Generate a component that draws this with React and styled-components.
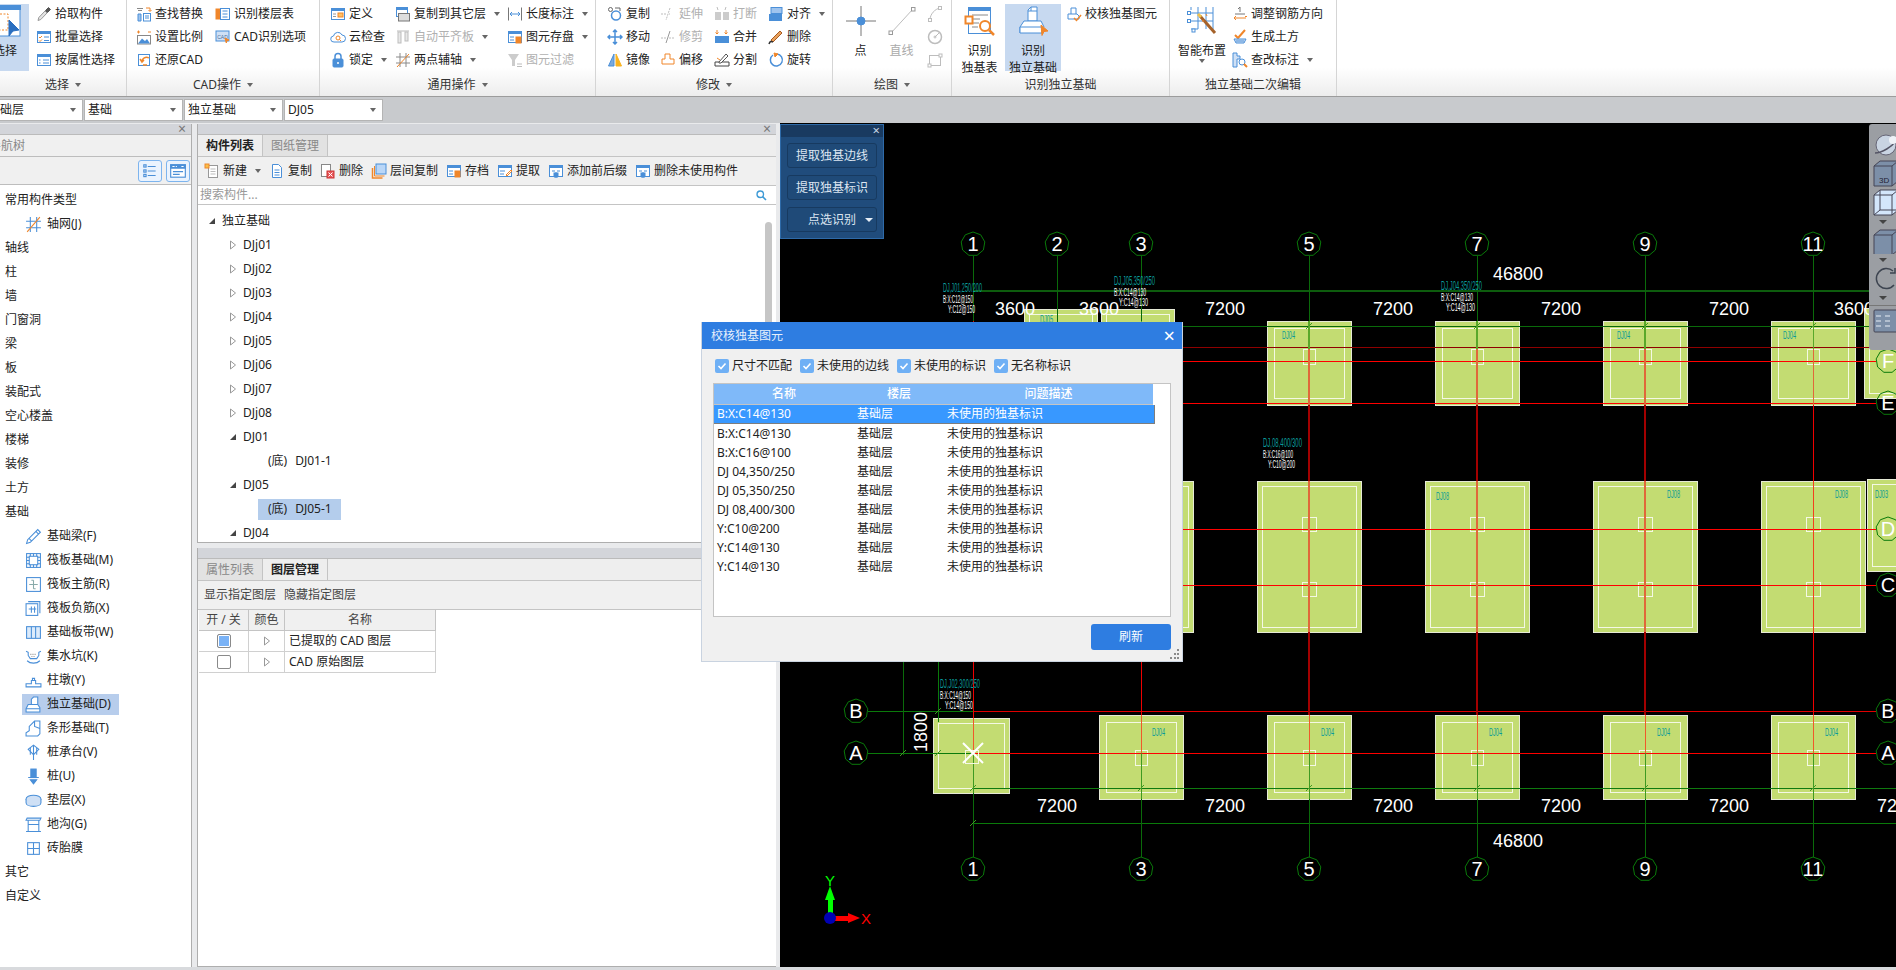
import React from 'react';
import styled, { createGlobalStyle } from 'styled-components';

const BL = '#4a8fd8';
const OR = '#f0862a';
const GY = '#bdbdbd';

const head = <rect x="1" y="2" width="14" height="3" fill={BL} stroke="none" />;
const win = <rect x="1.5" y="2.5" width="13" height="11" fill="#fff" />;

const icons = {
  pick: <><path d="M2 14.5l.8-3L9 5l2 2-6.2 6.5z" fill="#e4e4e4" stroke="#999" /><path d="M9.5 4.5l3-3 2 2-3 3z" fill="#555" stroke="#555" /></>,
  batch: <>{win}{head}<path d="M3 8l1 1 2-2M3 11.5l1 1 2-2" stroke={OR} /><path d="M8 8h5M8 11.5h5" /></>,
  attr: <>{win}{head}<path d="M3 8h1.5M3 11h1.5M7 8h6M7 11h6" /></>,
  findrep: <><path d="M1 2.5h6M2 4.500h4" stroke="#888" /><path d="M10 2h4v3M12.500 4l1.500 1.500L15.500 4" stroke={OR} /><rect x="7.500" y="7.500" width="7" height="7.500" fill="#fff" /><path d="M9 10h4M9 12h4" /><path d="M2 8v7h3V8z" fill="#9fc4ee" /></>,
  scale: <><path d="M1 3h3M2.500 1.500v3M12 3h3" stroke={OR} /><rect x="1.500" y="6.500" width="13" height="8.500" fill="#fff" stroke="#888" /><path d="M2 14.500l4-5 3 2.500 2-2 3 4.500z" fill={BL} stroke="none" /></>,
  restore: <><rect x="2.500" y="2.500" width="11" height="11" /><path d="M13 6a4.500 4.500 0 0 0-7 4M4 7l2 3 2-2M11 13H7" stroke={OR} strokeWidth="1.500" /></>,
  floortable: <><rect x="1" y="3" width="5" height="10" fill={OR} stroke={OR} /><rect x="5.500" y="2.500" width="9" height="11" fill="#fff" /><path d="M7.500 5h5M7.500 8h5M7.500 11h5" /></>,
  cadopt: <><rect x="1" y="2" width="13" height="10" fill="#cfe0f5" /><text x="2.200" y="9.500" fontSize="5" fill="#4a6e9a" stroke="none" fontFamily="Liberation Sans">CAD</text><path d="M10 9l4 2-2 .7-.7 2.300z" fill={OR} stroke={OR} /></>,
  define: <>{win}{head}<rect x="8" y="7" width="5" height="4" fill="#ffc266" stroke={OR} /><path d="M3 8h3M3 10.500h3" stroke="#999" /></>,
  cloud: <><path d="M4 13a3 3 0 0 1-.5-6A4.500 4.500 0 0 1 12 6a3.500 3.500 0 0 1 0 7z" fill="#fff" /><circle cx="8" cy="9" r="2" stroke={OR} /><path d="M9.500 10.500l1.500 1.500" stroke={OR} /></>,
  lock: <><path d="M5 7V4.500a3 3 0 0 1 6 0V7" strokeWidth="1.500" /><rect x="3" y="7" width="10" height="8" rx="1" fill={BL} /><circle cx="8" cy="11" r="1" fill="#fff" stroke="none" /></>,
  copyfloor: <><rect x="1.500" y="1.500" width="11" height="9" fill="#fff" /><rect x="1" y="1" width="12" height="3" fill={BL} stroke="none" /><rect x="3.500" y="7.500" width="11" height="7.500" fill="#ddd" stroke="#777" /></>,
  autoalign: <><path d="M2 2h12" stroke={GY} /><rect x="3" y="3" width="3" height="11" fill="#e8e8e8" stroke={GY} /><rect x="10" y="3" width="3" height="9" fill="#e8e8e8" stroke={GY} /></>,
  twopoint: <><path d="M1 5h14M1 11h14M5 1v14M11 1v14" stroke="#8a8a8a" /><path d="M2 15L14 2" stroke={OR} /></>,
  dimension: <><path d="M1.500 1.500v13M14.500 1.500v13" stroke="#777" /><path d="M3 8h10M5 6L3 8l2 2M11 6l2 2-2 2" /></>,
  saveunit: <>{win}{head}<path d="M3 8h4M3 11h4" /><rect x="9" y="8" width="5" height="6" fill={OR} stroke={OR} /></>,
  filter: <><path d="M1 2h11L8 8v6H5V8z" fill="#ccc" stroke="none" /><path d="M10 12h5M10 14.500h5" stroke={GY} /></>,
  copy: <><circle cx="3.500" cy="3.500" r="2" stroke="#666" /><path d="M8 2h5v3" stroke="#666" /><circle cx="9" cy="9.500" r="4.500" strokeWidth="1.500" /></>,
  move: <path d="M8 1v14M1 8h14M6 3l2-2 2 2M6 13l2 2 2-2M3 6L1 8l2 2M13 6l2 2-2 2" strokeWidth="1.500" />,
  mirror: <><path d="M7 2L1.500 14H7z" fill="#7aa9dd" /><path d="M9 2l5.500 12H9z" fill="#f9b320" stroke="#f9b320" /></>,
  extend: <path d="M1 8h6M10 2l-4 12M9 8h1" stroke={GY} strokeDasharray="2 1" />,
  trim: <><path d="M1 9h5M9 9h6" stroke={GY} strokeDasharray="2 1" /><path d="M10 2L6 14" stroke="#999" /></>,
  breakit: <><path d="M3 1l1 3M12 1l-1 3" stroke={GY} /><rect x="1" y="6" width="6" height="8" fill="#ccc" stroke="none" /><rect x="9" y="6" width="6" height="8" fill="#ccc" stroke="none" /></>,
  merge: <><path d="M3 1v4M1.500 3.500L3 5l1.500-1.500M12 1v4M10.500 3.500L12 5l1.500-1.500" stroke={OR} /><rect x="1" y="7" width="14" height="7" fill={BL} stroke="none" /></>,
  align: <><rect x="3" y="1.500" width="11" height="6" fill="#9fc4ee" /><rect x="1" y="8" width="13" height="7" fill={BL} stroke="none" /></>,
  erase: <><path d="M3 11L12 2l2 2-9 9z" fill="#e8a15c" stroke="#a85a20" /><path d="M1 15c1-3 2-3 4-2" stroke="#333" strokeWidth="1.500" /></>,
  offset: <path d="M5 2h5v5h4v5H2V7h3z" fill="#fff" stroke={OR} />,
  split: <><path d="M1 10h14v4H1z" fill="#fff" stroke="#444" /><path d="M5 10l7-8 2 2-7 7H5z" fill="#fff" stroke="#555" /><path d="M3 6l3 2" stroke={OR} /></>,
  rotate: <><path d="M5 3a6 6 0 1 0 4-1" strokeWidth="1.500" /><path d="M6 1l4 1-3 3z" fill={OR} stroke={OR} /></>,
  arc: <><path d="M3 14C3 8 8 3 13 2" stroke={GY} /><rect x="1.500" y="12.500" width="3" height="3" fill="#fff" stroke={GY} /><rect x="11.500" y="0.500" width="3" height="3" fill="#fff" stroke={GY} /></>,
  circ: <><circle cx="8" cy="8" r="6.500" stroke={GY} strokeWidth="1.500" /><path d="M8 8l4-4" stroke={GY} /><circle cx="8" cy="8" r="1" stroke={GY} /></>,
  rectd: <><rect x="2.500" y="3.500" width="11" height="10" stroke={GY} /><rect x="1" y="12" width="3" height="3" fill="#fff" stroke={GY} /><rect x="12" y="2" width="3" height="3" fill="#fff" stroke={GY} /></>,
  checkbase: <><path d="M5 8V2h5v6M2 8h9l2 2v3H2z" fill="#fff" /><path d="M8 12l2.500 2.500L15 9" stroke={OR} strokeWidth="1.500" /></>,
  rebar: <><path d="M8 1v5M6 3l2-2M3 8h10" stroke="#777" /><path d="M2 12h12M4 10l-2 2 2 2M13 10.500h2" stroke={OR} /></>,
  earth: <><path d="M3 6l3 3 7-8" stroke={OR} strokeWidth="2" /><path d="M2 10h12l-2 4H4z" fill="#cfe0f5" /><path d="M4 12h8" /></>,
  inspect: <><path d="M1 1h4v3h3v3H5v8H1z" fill="#cfe0f5" /><circle cx="10" cy="10" r="3" /><path d="M12 12l3 3" stroke={OR} strokeWidth="2" /></>,
  fresh: <><rect x="4.500" y="2.500" width="9" height="12" fill="#fff" stroke="#999" /><path d="M6.500 6h5M6.500 8.500h5M6.500 11h5" stroke="#bbb" /><rect x="1" y="1" width="4" height="4" fill="#f7c04a" stroke={OR} /></>,
  doc: <><path d="M3.500 1.500h6l3 3v10h-9z" fill="#fff" /><path d="M5.500 7h5M5.500 9.500h5M5.500 12h5" /></>,
  docdel: <><rect x="1.500" y="1.500" width="9" height="12" fill="#fff" stroke="#888" /><rect x="7" y="8" width="7" height="7" fill="#e8585a" stroke="#c33" /><path d="M8.500 9.500l4 4M12.500 9.500l-4 4" stroke="#fff" /></>,
  layercopy: <><path d="M1.500 5v10h10" stroke={OR} strokeWidth="1.500" /><path d="M3.500 3v10h10" stroke={OR} /><rect x="5" y="1" width="10" height="10" fill="#b9d6f7" /></>,
  extract: <>{win}{head}<path d="M3 8h5M3 11h4" /><path d="M9 12l5-5 1 1-5 5z" stroke={OR} /></>,
  prefix: <>{win}{head}<path d="M4 8h3M9 8h3M8 9v6M6 14h4" /><rect x="6" y="10" width="4" height="3" fill={BL} /></>,
  axisnet: <><path d="M1 5h14M1 11h14M5 1v14M11 1v14" /><path d="M2 15L14 1" stroke={OR} /></>,
  beam: <path d="M1.500 14.500l1-3.500L12 1.500l2.500 2.500L5 13.500zM4 10l2.500 2.500M10 3l3 3" />,
  raft: <><rect x="1.500" y="1.500" width="13" height="13" /><rect x="4" y="4" width="8" height="8" /><path d="M1.500 5h2.500M1.500 8h2.500M1.500 11h2.500M12 5h2.500M12 8h2.500M12 11h2.500M5 1.500V4M8 1.500V4M11 1.500V4M5 12v2.500M8 12v2.500M11 12v2.500" /></>,
  raftmain: <><rect x="1.500" y="1.500" width="13" height="13" /><path d="M8 4v8M4 8h8M6 4h2M8 12h2" stroke="#8aa" /></>,
  raftneg: <><rect x="1" y="3.500" width="11" height="11" fill="#fff" /><path d="M3 1.500h11v11" /><path d="M6 6v6M9 6v6M3.500 8.500h7" /></>,
  strip: <><rect x="1.500" y="2.500" width="13" height="11" fill="#dcebfb" /><path d="M6 2.500v11M10 2.500v11" /></>,
  sump: <><path d="M1 3l2 1v3l2 3h6l2-3V4l2-1" /><path d="M2 12c3 3 9 3 12 0" /><path d="M5 6h6M6 8h4" stroke="#999" strokeDasharray="1 1" /></>,
  pedestal: <><path d="M1 14h14v-3H10V8H6v3H1z" /><path d="M7 8V6h2v2" /></>,
  isofoot: <><path d="M6 8V3l2-2h4v7M1 15v-3l2-4h9l2 3v4z" fill="#fff" /><path d="M1 12h13" /></>,
  stripfoot: <><path d="M1 15v-3l3-2V6l5-5h5v12l-2 2z" fill="#fff" /><path d="M9 1v5l5 2" /></>,
  capv: <><path d="M8 1l5 4-5 5-5-5z" /><path d="M8 1v14M5 3.500V10M11 3.500V10" /></>,
  pile: <><rect x="5.500" y="1" width="5" height="8" fill={BL} /><path d="M3 9h10M5 11h6l-3 4z" fill={BL} /></>,
  cushion: <><ellipse cx="8" cy="6.500" rx="7" ry="3.500" fill="#cfe0f5" /><path d="M1 6.500V10c0 2 3 3.500 7 3.500s7-1.500 7-3.500V6.500" fill="#cfe0f5" /></>,
  trench: <><path d="M1 4l1-2h13l-1 2zM3 4v10M13 4v10M1 14.500h14M3 8h10" /></>,
  membrane: <><rect x="2.500" y="2.500" width="11" height="11" /><path d="M8 2.500v11M2.500 8h11M6 7h0M10 7h0" /></>,
  find: <><circle cx="6.500" cy="6.500" r="4" stroke="#3d9ad6" strokeWidth="1.700" /><path d="M9.500 9.500l4 4" stroke="#3d9ad6" strokeWidth="2" /></>,
  listview: <><path d="M6 4h7M6 8h7M6 12h7" /><rect x="2.500" y="2.500" width="2" height="2" /><rect x="2.500" y="7" width="2" height="2" /><rect x="2.500" y="11" width="2" height="2" /></>,
  panelview: <><rect x="1.500" y="2.500" width="13" height="11" fill="#fff" /><rect x="1" y="2" width="14" height="4" fill={BL} stroke="none" /><path d="M3 4h2M6 4h1M11 4h2" stroke="#fff" /><path d="M3.500 8.500h9M3.500 11h6" /></>
};

const bigIcons = {
  selectwin: <><rect x="1" y="1" width="30" height="30" fill="#fff" /><rect x="0" y="0" width="32" height="5" fill={BL} stroke="none" /><rect x="4" y="9" width="15" height="16" stroke={OR} strokeDasharray="2 1.500" /><path d="M20 15l10 10-6 1-4 5z" fill="#2a6fc0" stroke="#2a6fc0" /></>,
  point: <><path d="M16 1v12M16 19v12M1 16h12M19 16h12" stroke="#777" /><circle cx="16" cy="16" r="4" fill={BL} /></>,
  line: <><path d="M5 28L27 4" stroke={GY} /><rect x="3" y="26" width="3.500" height="3.500" fill="#fff" stroke="#999" /><rect x="25.500" y="2.500" width="3.500" height="3.500" fill="#fff" stroke="#999" /></>,
  readtable: <><rect x="4.500" y="3.500" width="22" height="25" fill="#fff" /><rect x="4" y="2" width="23" height="4" fill={BL} stroke="none" /><path d="M8 10h16M8 14h8M8 18h7M8 22h6" stroke="#888" /><rect x="1.500" y="11.500" width="7" height="7" fill="#fff" stroke={OR} strokeWidth="2" /><circle cx="21" cy="21" r="5" fill="#fff" stroke={OR} strokeWidth="2" /><path d="M25 25l5 5" stroke={OR} strokeWidth="2.500" /></>,
  readfoot: <><path d="M11 16V5l3-3h6v14z" fill="#fff" /><path d="M14 2v4h6M11 6h3" /><path d="M3 28v-6l4-6h17l3 6" fill="#fff" /><path d="M3 22h22v6H3z" fill="#fff" /><path d="M24 20l7 6-4 .5-2 4z" fill={OR} stroke={OR} /></>,
  wand: <><path d="M5 8h22M5 16h22M12 2v22M20 2v22M5 2v3M27 2v22M5 24h7" /><rect x="1.500" y="6.500" width="3" height="3" fill="#fff" /><rect x="1.500" y="14.500" width="3" height="3" fill="#fff" /><rect x="6" y="24" width="3" height="3" fill="#fff" /><path d="M14 11l15 17" stroke="#a5622a" strokeWidth="3" /><path d="M12 9l3 3" stroke="#f3c24a" strokeWidth="3" /><path d="M20 9l1 2M16 16l2 0" stroke={OR} /></>
};

const ribbonGroups = [
  {
    label: '选择', arrow: true, width: 127, pad: 0,
    cols: [
      { big: { icon: 'selectwin', lines: ['选择'], active: true, width: 48, shift: -19 } },
      { left: 7, items: [{ i: 'pick', t: '拾取构件' }, { i: 'batch', t: '批量选择' }, { i: 'attr', t: '按属性选择' }] }
    ]
  },
  {
    label: 'CAD操作', arrow: true, width: 193, pad: 9,
    cols: [
      { width: 79, items: [{ i: 'findrep', t: '查找替换' }, { i: 'scale', t: '设置比例' }, { i: 'restore', t: '还原CAD' }] },
      { items: [{ i: 'floortable', t: '识别楼层表' }, { i: 'cadopt', t: 'CAD识别选项' }] }
    ]
  },
  {
    label: '通用操作', arrow: true, width: 276, pad: 10,
    cols: [
      { width: 65, items: [{ i: 'define', t: '定义' }, { i: 'cloud', t: '云检查' }, { i: 'lock', t: '锁定', more: true }] },
      { width: 112, items: [{ i: 'copyfloor', t: '复制到其它层', more: true }, { i: 'autoalign', t: '自动平齐板', more: true, off: true }, { i: 'twopoint', t: '两点辅轴', more: true }] },
      { items: [{ i: 'dimension', t: '长度标注', more: true }, { i: 'saveunit', t: '图元存盘', more: true }, { i: 'filter', t: '图元过滤', off: true }] }
    ]
  },
  {
    label: '修改', arrow: true, width: 237, pad: 11,
    cols: [
      { width: 53, items: [{ i: 'copy', t: '复制' }, { i: 'move', t: '移动' }, { i: 'mirror', t: '镜像' }] },
      { width: 54, items: [{ i: 'extend', t: '延伸', off: true }, { i: 'trim', t: '修剪', off: true }, { i: 'offset', t: '偏移' }] },
      { width: 54, items: [{ i: 'breakit', t: '打断', off: true }, { i: 'merge', t: '合并' }, { i: 'split', t: '分割' }] },
      { items: [{ i: 'align', t: '对齐', more: true }, { i: 'erase', t: '删除' }, { i: 'rotate', t: '旋转' }] }
    ]
  },
  {
    label: '绘图', arrow: true, width: 119, pad: 7,
    cols: [
      { big: { icon: 'point', lines: ['点'], width: 41 } },
      { big: { icon: 'line', lines: ['直线'], width: 41, off: true } },
      { left: 5, items: [{ i: 'arc' }, { i: 'circ' }, { i: 'rectd' }] }
    ]
  },
  {
    label: '识别独立基础', width: 218, pad: 2,
    cols: [
      { big: { icon: 'readtable', lines: ['识别', '独基表'], width: 51 } },
      { big: { icon: 'readfoot', lines: ['识别', '独立基础'], active: true, width: 56 } },
      { left: 5, items: [{ i: 'checkbase', t: '校核独基图元' }] }
    ]
  },
  {
    label: '独立基础二次编辑', width: 167, pad: 4,
    cols: [
      { big: { icon: 'wand', lines: ['智能布置'], width: 56, more: true } },
      { left: 2, items: [{ i: 'rebar', t: '调整钢筋方向' }, { i: 'earth', t: '生成土方' }, { i: 'inspect', t: '查改标注', more: true }] }
    ]
  }
];

const selects = ['基础层', '基础', '独立基础', 'DJ05'];

const navRows = [
  { t: '常用构件类型' }, { t: '轴网(J)', i: 'axisnet' }, { t: '轴线' }, { t: '柱' }, { t: '墙' }, { t: '门窗洞' }, { t: '梁' },
  { t: '板' }, { t: '装配式' }, { t: '空心楼盖' }, { t: '楼梯' }, { t: '装修' }, { t: '土方' }, { t: '基础' },
  { t: '基础梁(F)', i: 'beam' }, { t: '筏板基础(M)', i: 'raft' }, { t: '筏板主筋(R)', i: 'raftmain' }, { t: '筏板负筋(X)', i: 'raftneg' },
  { t: '基础板带(W)', i: 'strip' }, { t: '集水坑(K)', i: 'sump' }, { t: '柱墩(Y)', i: 'pedestal' }, { t: '独立基础(D)', i: 'isofoot', on: true },
  { t: '条形基础(T)', i: 'stripfoot' }, { t: '桩承台(V)', i: 'capv' }, { t: '桩(U)', i: 'pile' }, { t: '垫层(X)', i: 'cushion' },
  { t: '地沟(G)', i: 'trench' }, { t: '砖胎膜', i: 'membrane' }, { t: '其它' }, { t: '自定义' }
];

const partTools = [
  { i: 'fresh', t: '新建', more: true }, { i: 'doc', t: '复制' }, { i: 'docdel', t: '删除' }, { i: 'layercopy', t: '层间复制' },
  { i: 'saveunit', t: '存档' }, { i: 'extract', t: '提取' }, { i: 'prefix', t: '添加前后缀' }, { i: 'prefix', t: '删除未使用构件' }
];

const treeRows = [
  { t: '独立基础', level: 0, open: true },
  ...['DJj01', 'DJj02', 'DJj03', 'DJj04', 'DJj05', 'DJj06', 'DJj07', 'DJj08'].map(t => ({ t, level: 1 })),
  { t: 'DJ01', level: 1, open: true },
  { leaf: true, t: 'DJ01-1' },
  { t: 'DJ05', level: 1, open: true },
  { leaf: true, t: 'DJ05-1', on: true },
  { t: 'DJ04', level: 1, open: true }
];

const checkRows = ['尺寸不匹配', '未使用的边线', '未使用的标识', '无名称标识'];

const problemRows = ['B:X:C14@130', 'B:X:C14@130', 'B:X:C16@100', 'DJ 04,350/250', 'DJ 05,350/250', 'DJ 08,400/300', 'Y:C10@200', 'Y:C14@130', 'Y:C14@130'];

export default function App() {
  return (
    <Page>
      <GlobalStyle />
      <Ribbon>
        {ribbonGroups.map(g => <RibbonGroup key={g.label} group={g} />)}
      </Ribbon>
      <SelectBar>
        {selects.map(s => (
          <FloorSelect key={s}>
            <span>{s}</span>
            <Caret />
          </FloorSelect>
        ))}
      </SelectBar>
      <Workspace>
        <NavPanel />
        <MiddleColumn>
          <PartsPanel />
          <LayersPanel />
        </MiddleColumn>
        <Canvas>
          <CadDrawing />
          <FloatPanel>
            <FloatHead><FloatClose>×</FloatClose></FloatHead>
            <FloatBtn>提取独基边线</FloatBtn>
            <FloatBtn>提取独基标识</FloatBtn>
            <FloatBtn>点选识别<FloatCaret /></FloatBtn>
          </FloatPanel>
          <ViewTools />
        </Canvas>
      </Workspace>
      <BottomBar />
      <CheckDialog />
    </Page>
  );
}

function Icon({ name, size = 16 }) {
  const big = bigIcons[name];
  const box = big ? 32 : 16;
  return <IconSvg width={size} height={size} viewBox={`0 0 ${box} ${box}`}>{big || icons[name]}</IconSvg>;
}

function RibbonGroup({ group }) {
  return (
    <Group $width={group.width}>
      <GroupBody $pad={group.pad}>
        {group.cols.map((col, n) => col.big
          ? <BigTool key={n} {...col.big} />
          : (
            <ToolCol key={n} $width={col.width} $left={col.left}>
              {col.items.map(it => (
                <SmallTool key={it.i} $off={it.off}>
                  <Icon name={it.i} />
                  {it.t && <span>{it.t}</span>}
                  {it.more && <Caret />}
                </SmallTool>
              ))}
            </ToolCol>
          ))}
      </GroupBody>
      <GroupLabel>{group.label}{group.arrow && <Caret $gap={6} />}</GroupLabel>
    </Group>
  );
}

function BigTool({ icon, lines, active, width, shift, off, more }) {
  return (
    <BigBtn $active={active} $width={width} $shift={shift} $off={off}>
      <Icon name={icon} size={32} />
      <BigText>{lines.map(l => <div key={l}>{l}</div>)}</BigText>
      {more && <Caret $gap={0} />}
    </BigBtn>
  );
}

function NavPanel() {
  return (
    <Nav>
      <PanelHead><HeadClose>×</HeadClose></PanelHead>
      <NavTitle><span>导航树</span></NavTitle>
      <NavTools>
        <ViewBtn><Icon name="listview" size={18} /></ViewBtn>
        <ViewBtn><Icon name="panelview" size={18} /></ViewBtn>
      </NavTools>
      <NavList>
        {navRows.map(r => r.i
          ? (
            <NavChildRow key={r.t}>
              <NavChild $on={r.on}>
                <Icon name={r.i} size={17} />
                <span>{r.t}</span>
              </NavChild>
            </NavChildRow>
          )
          : <NavRow key={r.t}>{r.t}</NavRow>)}
      </NavList>
    </Nav>
  );
}

function PartsPanel() {
  return (
    <Panel>
      <PanelHead><HeadClose>×</HeadClose></PanelHead>
      <Tabs>
        <Tab $on>构件列表</Tab>
        <Tab>图纸管理</Tab>
      </Tabs>
      <PartBar>
        {partTools.map(p => (
          <SmallTool key={p.t}>
            <Icon name={p.i} />
            <span>{p.t}</span>
            {p.more && <Caret />}
          </SmallTool>
        ))}
      </PartBar>
      <SearchRow>
        <span>搜索构件...</span>
        <Icon name="find" size={13} />
      </SearchRow>
      <Tree>
        {treeRows.map(r => r.leaf
          ? (
            <LeafRow key={r.t}>
              <LeafText $on={r.on}><span>(底)</span>{r.t}</LeafText>
            </LeafRow>
          )
          : (
            <TreeRow key={r.t} $level={r.level}>
              <svg width="8" height="10" viewBox="0 0 8 10">
                {r.open ? <path d="M1 8h6V2z" fill="#444" /> : <path d="M1.500 1l5 4-5 4z" fill="#fff" stroke="#999" />}
              </svg>
              <span>{r.t}</span>
            </TreeRow>
          ))}
        <ScrollThumb />
      </Tree>
    </Panel>
  );
}

function LayersPanel() {
  return (
    <Panel>
      <PanelHead />
      <Tabs>
        <Tab>属性列表</Tab>
        <Tab $on>图层管理</Tab>
      </Tabs>
      <LayerActions>
        <span>显示指定图层</span>
        <span>隐藏指定图层</span>
      </LayerActions>
      <LayerGrid>
        <LayerHead>开 / 关</LayerHead>
        <LayerHead>颜色</LayerHead>
        <LayerHead>名称</LayerHead>
        {[{ t: '已提取的 CAD 图层', on: true }, { t: 'CAD 原始图层' }].map(l => (
          <React.Fragment key={l.t}>
            <LayerCell $center><LayerCheck $on={l.on} /></LayerCell>
            <LayerCell $center>
              <svg width="8" height="10" viewBox="0 0 8 10"><path d="M1.500 1l5 4-5 4z" fill="#fff" stroke="#999" /></svg>
            </LayerCell>
            <LayerCell>{l.t}</LayerCell>
          </React.Fragment>
        ))}
      </LayerGrid>
    </Panel>
  );
}

function CheckDialog() {
  return (
    <Dialog>
      <DialogTitle>
        <span>校核独基图元</span>
        <DialogClose>×</DialogClose>
      </DialogTitle>
      <CheckRow>
        {checkRows.map(c => (
          <CheckItem key={c}>
            <CheckBox>
              <svg width="10" height="10" viewBox="0 0 10 10"><path d="M1.500 5l2.500 2.500L8.500 2.500" fill="none" stroke="#fff" strokeWidth="1.600" /></svg>
            </CheckBox>
            {c}
          </CheckItem>
        ))}
      </CheckRow>
      <ProblemTable>
        <ProblemHead>
          <span>名称</span>
          <span>楼层</span>
          <span>问题描述</span>
        </ProblemHead>
        {problemRows.map((name, n) => (
          <ProblemRow key={n} $on={n === 0}>
            <span>{name}</span>
            <span>基础层</span>
            <span>未使用的独基标识</span>
          </ProblemRow>
        ))}
      </ProblemTable>
      <DialogFoot>
        <RefreshBtn>刷新</RefreshBtn>
      </DialogFoot>
      <Grip width="10" height="10" viewBox="0 0 10 10">
        <path d="M7 0h2v2H7zM4 4h2v2H4zM7 4h2v2H7zM0 8h2v2H0zM4 8h2v2H4zM7 8h2v2H7z" fill="#8a8a8a" />
      </Grip>
    </Dialog>
  );
}

function ViewTools() {
  return (
    <ViewBar>
      <svg width="32" height="26" viewBox="0 0 32 26">
        <circle cx="13" cy="13" r="10" fill="#c9d4e2" stroke="#667" />
        <path d="M2 21c6 0 18-6 22-14" fill="none" stroke="#556" strokeWidth="1.500" />
        <circle cx="20" cy="8" r="4" fill="#eef2f7" />
      </svg>
      <svg width="32" height="28" viewBox="0 0 32 28">
        <path d="M1 7l6-5h18v20l-6 5H1z" fill="#7c8fa8" stroke="#445" />
        <path d="M1 7h18v20M19 7l6-5" fill="none" stroke="#445" />
        <text x="6" y="24" fontSize="8" fill="#223" fontFamily="Liberation Sans">3D</text>
      </svg>
      <svg width="32" height="28" viewBox="0 0 32 28">
        <path d="M1 7l6-5h18v20l-6 5H1z" fill="#d3e6fb" stroke="#445" />
        <path d="M1 7h18v20M19 7l6-5M7 2v20h18M1 27l6-5" fill="none" stroke="#445" />
      </svg>
      <ViewCaret />
      <svg width="32" height="26" viewBox="0 0 32 26">
        <path d="M1 7l6-5h18v20l-6 5H1z" fill="#7c8fa8" stroke="#445" />
        <path d="M1 7h18v20M19 7l6-5" fill="none" stroke="#445" />
      </svg>
      <ViewCaret />
      <svg width="32" height="26" viewBox="0 0 32 26">
        <path d="M20 5A10 10 0 1 0 21 19" fill="none" stroke="#3d4450" strokeWidth="1.500" />
        <path d="M17 7l5 0 0-5" fill="none" stroke="#3d4450" strokeWidth="1.500" />
      </svg>
      <ViewCaret />
      <ViewRule />
      <svg width="32" height="26" viewBox="0 0 32 26">
        <rect x="1" y="2" width="24" height="22" rx="1" fill="#7c8fa8" stroke="#445" />
        <path d="M3 8h5M3 13h5M3 18h5M12 8h5M12 13h5M12 18h5" stroke="#e8eef5" />
      </svg>
    </ViewBar>
  );
}

const topAxes = [{ x: 973, t: '1' }, { x: 1057, t: '2' }, { x: 1141, t: '3' }, { x: 1309, t: '5' }, { x: 1477, t: '7' }, { x: 1645, t: '9' }, { x: 1813, t: '11' }];
const bottomAxes = [{ x: 973, t: '1' }, { x: 1141, t: '3' }, { x: 1309, t: '5' }, { x: 1477, t: '7' }, { x: 1645, t: '9' }, { x: 1813, t: '11' }];
const sideAxes = [
  { x: 856, y: 711, t: 'B' }, { x: 856, y: 753, t: 'A' }, { x: 1888, y: 361, t: 'F' }, { x: 1888, y: 403, t: 'E' },
  { x: 1888, y: 529, t: 'D' }, { x: 1888, y: 585, t: 'C' }, { x: 1888, y: 711, t: 'B' }, { x: 1888, y: 753, t: 'A' }
];
const redRows = [{ y: 347, c: '#8f0000', end: 1896 }, { y: 361, c: '#f00', end: 1876 }, { y: 403, c: '#f00', end: 1876 }, { y: 529, c: '#f00', end: 1876 }, { y: 585, c: '#f00', end: 1876 }, { y: 711, c: '#e00000', end: 1876 }, { y: 753, c: '#f00', end: 1876 }];
const dims = [
  { x: 1518, y: 273, t: '46800' }, { x: 1518, y: 840, t: '46800' },
  { x: 1015, y: 308, t: '3600' }, { x: 1099, y: 308, t: '3600' }, { x: 1225, y: 308, t: '7200' }, { x: 1393, y: 308, t: '7200' },
  { x: 1561, y: 308, t: '7200' }, { x: 1729, y: 308, t: '7200' }, { x: 1854, y: 308, t: '3600' },
  { x: 1057, y: 805, t: '7200' }, { x: 1225, y: 805, t: '7200' }, { x: 1393, y: 805, t: '7200' }, { x: 1561, y: 805, t: '7200' },
  { x: 1729, y: 805, t: '7200' }, { x: 1897, y: 805, t: '7200' }
];
const notes = [
  { x: 943, y: 292, w: 39, t: 'DJ,J01,250/200', sub: 'C12@150' },
  { x: 1114, y: 285, w: 41, t: 'DJ,J05,350/250', sub: 'C14@130' },
  { x: 1441, y: 290, w: 41, t: 'DJ,J04,350/250', sub: 'C14@130' },
  { x: 1263, y: 447, w: 39, t: 'DJ,08,400/300', sub: 'C16@100', subY: 'C10@200' },
  { x: 940, y: 688, w: 40, t: 'DJ,J02,300/250', sub: 'C14@150' }
];
const marks = [
  { x: 1282, y: 339, t: 'DJ04' }, { x: 1617, y: 339, t: 'DJ04' }, { x: 1783, y: 339, t: 'DJ04' }, { x: 1436, y: 500, t: 'DJ08' },
  { x: 1667, y: 498, t: 'DJ08' }, { x: 1835, y: 498, t: 'DJ08' }, { x: 1875, y: 498, t: 'DJ03' }, { x: 1152, y: 736, t: 'DJ04' },
  { x: 1321, y: 736, t: 'DJ04' }, { x: 1489, y: 736, t: 'DJ04' }, { x: 1657, y: 736, t: 'DJ04' }, { x: 1825, y: 736, t: 'DJ04' },
  { x: 1040, y: 323, t: 'DJ05' }
];

function octagon(cx, cy, r) {
  return Array.from({ length: 9 }, (_, n) => {
    const a = (n * 2 * Math.PI) / 9 - Math.PI / 2;
    return `${(cx + r * Math.cos(a)).toFixed(1)},${(cy + r * Math.sin(a)).toFixed(1)}`;
  }).join(' ');
}

function Footing({ x, y, w, h, inset = 5, squares = [], square = [12, 15] }) {
  return (
    <g>
      <rect x={x} y={y} width={w} height={h} fill="#c3dc72" stroke="#e6ead6" />
      <rect x={x + inset} y={y + inset} width={w - inset * 2} height={h - inset * 2} fill="none" stroke="#f4f8e4" />
      {squares.map(s => (
        <rect key={s} x={x + w / 2 - square[0] / 2} y={s} width={square[0]} height={square[1]} fill="none" stroke="#f4f8e4" />
      ))}
    </g>
  );
}

function Axis({ x, y, t }) {
  return (
    <g>
      <polygon points={octagon(x, y, 12)} fill="none" stroke="#0a7a0a" />
      <CadText x={x} y={y + 7} textAnchor="middle" fontSize="20">{t}</CadText>
    </g>
  );
}

function VLine({ x, from, to, c, w = 1 }) {
  return <line x1={x} x2={x} y1={from} y2={to} stroke={c} strokeWidth={w} />;
}

function AxisLine({ x }) {
  const dark = x === 1309 || x === 1477 || x === 1645;
  const red = dark ? '#a30000' : '#ee0000';
  const w = dark ? 2 : 1;
  return (
    <g>
      <VLine x={x} from={256} to={321} c="#0a6a0a" />
      <VLine x={x} from={321} to={349} c="#5aa82a" w={w} />
      <VLine x={x} from={349} to={405} c="#e0683a" w={w} />
      <VLine x={x} from={405} to={481} c={red} w={w} />
      <VLine x={x} from={481} to={632} c={dark ? '#e0683a' : '#f2401e'} w={w} />
      <VLine x={x} from={632} to={715} c={red} w={w} />
      <VLine x={x} from={715} to={753} c="#ef5a2a" />
      <VLine x={x} from={753} to={799} c="#3f9a22" />
      <VLine x={x} from={799} to={857} c="#0a6a0a" />
    </g>
  );
}

function Tick({ x, y }) {
  return <line x1={x - 3} y1={y + 3} x2={x + 3} y2={y - 3} stroke="#3f9a22" />;
}

function Note({ x, y, w, t, sub, subY }) {
  return (
    <g>
      <NoteText x={x} y={y} fontSize="12" fill="#0a9a9a" textLength={w} lengthAdjust="spacingAndGlyphs">{t}</NoteText>
      <NoteText x={x} y={y + 11} fontSize="11" fill="#fff" textLength={w - 9} lengthAdjust="spacingAndGlyphs">{`B:X:${sub}`}</NoteText>
      <NoteText x={x + 5} y={y + 21} fontSize="11" fill="#fff" textLength={w - 12} lengthAdjust="spacingAndGlyphs">{`Y:${subY || sub}`}</NoteText>
    </g>
  );
}

function CadDrawing() {
  return (
    <CadSvg width="1116" height="844" viewBox="780 123 1116 844">
      <rect x="780" y="123" width="1116" height="844" fill="#000" />
      <Footing x={1024} y={309} w={73} h={84} />
      <Footing x={1101} y={309} w={73} h={84} />
      {[1309, 1477, 1645, 1813].map(c => (
        <Footing key={c} x={c - 42} y={321} w={84} h={84} inset={7} squares={[349]} />
      ))}
      <Footing x={1864} y={308} w={50} h={90} inset={5} />
      {[1141, 1309, 1477, 1645, 1813].map(c => (
        <Footing key={c} x={c - 52} y={481} w={104} h={151} square={[14, 14]} squares={[517, 582]} />
      ))}
      <Footing x={1867} y={479} w={50} h={92} />
      {[1141, 1309, 1477, 1645, 1813].map(c => (
        <Footing key={c} x={c - 42} y={715} w={84} h={84} inset={7} squares={[750]} />
      ))}
      <Footing x={933} y={718} w={76} h={75} />

      <line x1="973" x2="1896" y1="291" y2="291" stroke="#0d5c0d" strokeWidth="2" />
      <line x1="973" x2="1896" y1="326" y2="326" stroke="#0a6a0a" />
      {redRows.map(r => <line key={r.y} x1="973" x2={r.end} y1={r.y} y2={r.y} stroke={r.c} />)}
      <line x1="868" x2="973" y1="711" y2="711" stroke="#0a7a0a" />
      <line x1="868" x2="973" y1="753" y2="753" stroke="#0a7a0a" />
      <line x1="973" x2="1896" y1="788" y2="788" stroke="#0f7a0f" />
      <line x1="973" x2="1896" y1="823" y2="823" stroke="#0a7a0a" />
      <VLine x={903} from={600} to={755} c="#0a6a0a" />
      <VLine x={938} from={600} to={722} c="#0a7a0a" />

      <VLine x={973} from={256} to={321} c="#0a6a0a" />
      <VLine x={973} from={321} to={718} c="#ee0000" />
      <VLine x={973} from={718} to={753} c="#ef5a2a" />
      <VLine x={973} from={753} to={793} c="#3f9a22" />
      <VLine x={973} from={793} to={857} c="#0a6a0a" />
      <VLine x={1057} from={256} to={330} c="#0a6a0a" />
      {[1141, 1309, 1477, 1645, 1813].map(x => <AxisLine key={x} x={x} />)}

      {[1309, 1477, 1645, 1813].map(x => <Tick key={x} x={x} y={326} />)}
      {[973, 1141, 1309, 1477, 1645, 1813].map(x => <Tick key={x} x={x} y={788} />)}
      <Tick x={973} y={823} />
      <Tick x={903} y={753} />
      <Tick x={938} y={711} />
      <Tick x={938} y={753} />

      <rect x="965" y="750" width="13" height="13" fill="none" stroke="#f4f8e4" />
      <WhiteCross>
        <line x1="963" y1="763" x2="983" y2="743" />
        <line x1="963" y1="743" x2="983" y2="763" />
      </WhiteCross>

      {topAxes.map(a => <Axis key={a.t} x={a.x} y={244} t={a.t} />)}
      {bottomAxes.map(a => <Axis key={a.t} x={a.x} y={869} t={a.t} />)}
      {sideAxes.map(a => <Axis key={`${a.x}${a.t}`} x={a.x} y={a.y} t={a.t} />)}

      {dims.map(d => <CadText key={`${d.x}${d.y}`} x={d.x} y={d.y + 7} textAnchor="middle" fontSize="18">{d.t}</CadText>)}
      <CadText textAnchor="middle" fontSize="18" transform="translate(927 732) rotate(-90)">1800</CadText>
      <CadText textAnchor="middle" fontSize="18" transform="translate(927 640) rotate(-90)">7200</CadText>

      {notes.map(n => <Note key={n.x} {...n} />)}
      {marks.map(m => (
        <NoteText key={`${m.x}${m.y}`} x={m.x} y={m.y} fontSize="11" fill="#0a9a9a" textLength="13" lengthAdjust="spacingAndGlyphs">{m.t}</NoteText>
      ))}

      <line x1="830" x2="830" y1="918" y2="896" stroke="#0f0" strokeWidth="5" />
      <polygon points="830,886 825,900 835,900" fill="#0f0" />
      <NoteText x="830" y="886" textAnchor="middle" fontSize="15" fill="#0f0">Y</NoteText>
      <line x1="830" x2="850" y1="918" y2="918" stroke="#f00" strokeWidth="5" />
      <polygon points="860,918 848,913 848,923" fill="#f00" />
      <NoteText x="866" y="924" textAnchor="middle" fontSize="15" fill="#f00">X</NoteText>
      <circle cx="830" cy="918" r="6" fill="#0000b4" />
    </CadSvg>
  );
}

const GlobalStyle = createGlobalStyle`
  html, body {
    margin: 0;
    height: 100%;
    overflow: hidden;
    background: #c8cacd;
  }
  body {
    font-family: "Noto Sans", "Noto Sans CJK SC", sans-serif;
    font-size: 12px;
    line-height: 16px;
    color: #222;
  }
  #root {
    height: 100%;
  }
`;

const Page = styled.div`
  position: relative;
  width: 1896px;
  height: 970px;
  display: flex;
  flex-direction: column;
  overflow: hidden;
`;

const IconSvg = styled.svg`
  flex-shrink: 0;
  display: block;
  fill: none;
  stroke: ${BL};
  stroke-width: 1;
`;

const Caret = styled.i`
  display: inline-block;
  flex-shrink: 0;
  width: 0;
  height: 0;
  margin-left: ${p => p.$gap ?? 5}px;
  border-left: 3.5px solid transparent;
  border-right: 3.5px solid transparent;
  border-top: 4px solid #666;
`;

const Ribbon = styled.div`
  height: 96px;
  display: flex;
  background: linear-gradient(#fff 0, #fff 70%, #ededed 100%);
  border-bottom: 1px solid #9c9c9c;
  flex-shrink: 0;
`;

const Group = styled.div`
  width: ${p => p.$width}px;
  display: flex;
  flex-direction: column;
  border-right: 1px solid #d5d5d5;
  box-sizing: border-box;
  flex-shrink: 0;
`;

const GroupBody = styled.div`
  height: 71px;
  padding: 2px 0 0 ${p => p.$pad}px;
  display: flex;
`;

const GroupLabel = styled.div`
  flex: 1;
  display: flex;
  align-items: center;
  justify-content: center;
  color: #333;
`;

const ToolCol = styled.div`
  width: ${p => (p.$width ? `${p.$width}px` : 'auto')};
  margin-left: ${p => p.$left || 0}px;
  display: flex;
  flex-direction: column;
`;

const SmallTool = styled.div`
  height: 23px;
  display: flex;
  align-items: center;
  gap: 3px;
  white-space: nowrap;
  color: ${p => (p.$off ? '#b0b0b0' : '#222')};
`;

const BigBtn = styled.div`
  width: ${p => p.$width}px;
  height: 67px;
  margin-top: 2px;
  margin-left: ${p => p.$shift || 0}px;
  padding-top: 1px;
  box-sizing: border-box;
  flex-shrink: 0;
  display: flex;
  flex-direction: column;
  align-items: center;
  background: ${p => (p.$active ? '#c7d9f0' : 'transparent')};
  color: ${p => (p.$off ? '#aaa' : '#222')};
`;

const BigText = styled.div`
  margin-top: 5px;
  text-align: center;
  white-space: nowrap;
  line-height: 17px;
`;

const SelectBar = styled.div`
  height: 26px;
  box-sizing: border-box;
  padding-top: 2px;
  margin-left: -16px;
  display: flex;
  gap: 1.5px;
  background: #c8cacd;
  flex-shrink: 0;
`;

const FloorSelect = styled.div`
  width: 98.5px;
  height: 22px;
  box-sizing: border-box;
  padding: 0 6px 0 3px;
  background: #fff;
  border: 1px solid #b4b4b4;
  display: flex;
  align-items: center;
  justify-content: space-between;
  span {
    white-space: nowrap;
  }
`;

const Workspace = styled.div`
  flex: 1;
  min-height: 0;
  display: flex;
  background: #e9eaec;
`;

const Nav = styled.div`
  width: 192px;
  display: flex;
  flex-direction: column;
  border-right: 1px solid #aeaeae;
  box-sizing: border-box;
  background: #fff;
  margin-top: 1px;
`;

const PanelHead = styled.div`
  height: 11px;
  box-sizing: border-box;
  flex-shrink: 0;
  background: #d3d5da;
  position: relative;
  border-bottom: 1px solid #bbb;
`;

const HeadClose = styled.span`
  position: absolute;
  right: 5px;
  top: -3px;
  font-size: 14px;
  line-height: 16px;
  color: #777;
`;

const NavTitle = styled.div`
  height: 22px;
  box-sizing: border-box;
  background: #f0f0f0;
  border-bottom: 1px solid #bdbdbd;
  color: #888;
  display: flex;
  align-items: center;
  margin-left: -11px;
  flex-shrink: 0;
`;

const NavTools = styled.div`
  height: 28px;
  box-sizing: border-box;
  background: #f0f0f0;
  border-bottom: 1px solid #bdbdbd;
  display: flex;
  align-items: center;
  justify-content: flex-end;
  gap: 4px;
  padding-right: 1px;
  flex-shrink: 0;
`;

const ViewBtn = styled.div`
  width: 24px;
  height: 22px;
  box-sizing: border-box;
  border: 1px solid #7db4ee;
  border-radius: 3px;
  background: #eaf3fe;
  display: flex;
  align-items: center;
  justify-content: center;
`;

const NavList = styled.div`
  padding-top: 3px;
  flex: 1;
`;

const NavRow = styled.div`
  height: 24px;
  padding-left: 5px;
  display: flex;
  align-items: center;
`;

const NavChildRow = styled.div`
  height: 24px;
  padding-left: 22px;
  display: flex;
  align-items: center;
`;

const NavChild = styled.div`
  height: 21px;
  width: 97px;
  padding-left: 3px;
  box-sizing: border-box;
  display: flex;
  align-items: center;
  gap: 5px;
  white-space: nowrap;
  background: ${p => (p.$on ? '#b7cdec' : 'transparent')};
`;

const MiddleColumn = styled.div`
  width: 579px;
  margin-left: 5px;
  margin-top: 1px;
  display: flex;
  flex-direction: column;
  gap: 5px;
  flex-shrink: 0;
`;

const Panel = styled.div`
  flex: 1;
  min-height: 0;
  display: flex;
  flex-direction: column;
  background: #fff;
  border-left: 1px solid #aeaeae;
  border-bottom: 1px solid #aeaeae;
  box-sizing: border-box;
`;

const Tabs = styled.div`
  height: 22px;
  box-sizing: border-box;
  display: flex;
  background: #eee;
  border-bottom: 1px solid #c4c4c4;
  flex-shrink: 0;
`;

const Tab = styled.div`
  width: 65px;
  box-sizing: border-box;
  display: flex;
  align-items: center;
  justify-content: center;
  border-right: 1px solid #c4c4c4;
  font-weight: ${p => (p.$on ? 600 : 400)};
  color: ${p => (p.$on ? '#222' : '#888')};
  background: ${p => (p.$on ? '#eee' : '#e2e2e2')};
`;

const PartBar = styled.div`
  height: 29px;
  box-sizing: border-box;
  padding-left: 6px;
  display: flex;
  align-items: center;
  gap: 8px;
  background: #f0f0f0;
  border-bottom: 1px solid #c4c4c4;
  flex-shrink: 0;
`;

const SearchRow = styled.div`
  height: 19px;
  box-sizing: border-box;
  padding: 0 8px 0 2px;
  display: flex;
  align-items: center;
  justify-content: space-between;
  color: #999;
  border-bottom: 1px solid #c4c4c4;
  flex-shrink: 0;
`;

const Tree = styled.div`
  flex: 1;
  min-height: 0;
  overflow: hidden;
  position: relative;
  padding-top: 4px;
`;

const TreeRow = styled.div`
  height: 24px;
  padding-left: ${p => (p.$level ? 31 : 10)}px;
  display: flex;
  align-items: center;
  gap: 6px;
`;

const LeafRow = styled.div`
  height: 24px;
  padding-left: 60px;
  display: flex;
  align-items: center;
`;

const LeafText = styled.div`
  width: 83px;
  height: 21px;
  box-sizing: border-box;
  padding-left: 10px;
  display: flex;
  align-items: center;
  gap: 8px;
  white-space: nowrap;
  background: ${p => (p.$on ? '#b4cdec' : 'transparent')};
`;

const ScrollThumb = styled.div`
  position: absolute;
  right: 4px;
  top: 17px;
  width: 7px;
  height: 110px;
  border-radius: 4px;
  background: #c6c6c6;
`;

const LayerActions = styled.div`
  height: 29px;
  box-sizing: border-box;
  padding-left: 6px;
  display: flex;
  align-items: center;
  gap: 8px;
  background: #f0f0f0;
  border-bottom: 1px solid #c4c4c4;
  color: #444;
  flex-shrink: 0;
`;

const LayerGrid = styled.div`
  display: grid;
  grid-template-columns: 50px 36px 151px;
  grid-auto-rows: 21px;
  width: 237px;
  margin-left: 1px;
`;

const LayerHead = styled.div`
  display: flex;
  align-items: center;
  justify-content: center;
  background: #f0f0f0;
  border-right: 1px solid #c4c4c4;
  border-bottom: 1px solid #c4c4c4;
  color: #444;
`;

const LayerCell = styled.div`
  display: flex;
  align-items: center;
  justify-content: ${p => (p.$center ? 'center' : 'flex-start')};
  padding-left: ${p => (p.$center ? 0 : 4)}px;
  border-right: 1px solid #d0d0d0;
  border-bottom: 1px solid #d0d0d0;
  white-space: nowrap;
`;

const LayerCheck = styled.div`
  width: 14px;
  height: 14px;
  box-sizing: border-box;
  border: 1px solid #8a8a8a;
  border-radius: 2px;
  background: ${p => (p.$on ? '#79b2f6' : '#fff')};
  box-shadow: ${p => (p.$on ? 'inset 0 0 0 1px #fff' : 'none')};
`;

const Canvas = styled.div`
  position: relative;
  width: 1116px;
  margin-left: 4px;
  background: #000;
  overflow: hidden;
  flex-shrink: 0;
`;

const CadSvg = styled.svg`
  display: block;
  line, rect {
    shape-rendering: crispEdges;
  }
`;

const WhiteCross = styled.g`
  line {
    stroke: #fff;
    stroke-width: 2;
    shape-rendering: auto;
  }
`;

const CadText = styled.text`
  fill: #fff;
  font-family: "Liberation Sans", sans-serif;
`;

const NoteText = styled.text`
  font-family: "Liberation Sans", sans-serif;
`;

const FloatPanel = styled.div`
  position: absolute;
  left: 0;
  top: 1px;
  width: 104px;
  height: 115px;
  box-sizing: border-box;
  background: #204c7c;
  border: 1px solid #2e6aa8;
`;

const FloatHead = styled.div`
  height: 12px;
  background: #193a60;
  position: relative;
  margin-bottom: 6px;
`;

const FloatClose = styled.span`
  position: absolute;
  right: 3px;
  top: -2px;
  font-size: 13px;
  line-height: 14px;
  color: #c6d4e4;
`;

const FloatBtn = styled.div`
  position: relative;
  width: 90px;
  height: 25px;
  margin: 0 0 7px 6px;
  box-sizing: border-box;
  display: flex;
  align-items: center;
  justify-content: center;
  background: #1f4a78;
  border: 1px solid #173a60;
  border-radius: 3px;
  color: #dde6f1;
  white-space: nowrap;
`;

const FloatCaret = styled.i`
  position: absolute;
  right: 3px;
  top: 10px;
  border-left: 4px solid transparent;
  border-right: 4px solid transparent;
  border-top: 4px solid #e6edf5;
`;

const ViewBar = styled.div`
  position: absolute;
  right: 0;
  top: 1px;
  width: 27px;
  height: 226px;
  box-sizing: border-box;
  padding: 8px 0 0 4px;
  background: #9b9ea3;
  border-radius: 3px 0 0 3px;
  display: flex;
  flex-direction: column;
  gap: 1px;
  overflow: hidden;
  svg {
    flex-shrink: 0;
  }
`;

const ViewCaret = styled.i`
  width: 0;
  height: 0;
  margin: 3px 0 3px 6px;
  border-left: 4px solid transparent;
  border-right: 4px solid transparent;
  border-top: 4px solid #444;
`;

const ViewRule = styled.div`
  height: 1px;
  margin: 1px 0 1px -4px;
  background: #777;
  flex-shrink: 0;
`;

const BottomBar = styled.div`
  height: 3px;
  background: #d8dadd;
  flex-shrink: 0;
`;

const Dialog = styled.div`
  position: absolute;
  left: 701px;
  top: 322px;
  width: 482px;
  height: 340px;
  box-sizing: border-box;
  background: #f0f0f0;
  border: 1px solid #c9d3e0;
  border-top: none;
  display: flex;
  flex-direction: column;
`;

const DialogTitle = styled.div`
  height: 27px;
  padding: 0 7px 0 9px;
  display: flex;
  align-items: center;
  justify-content: space-between;
  background: #2e7de1;
  color: #e6f0fc;
  flex-shrink: 0;
`;

const DialogClose = styled.span`
  font-size: 20px;
  line-height: 20px;
  color: #fff;
`;

const CheckRow = styled.div`
  height: 34px;
  padding-left: 13px;
  display: flex;
  align-items: center;
  gap: 8px;
  flex-shrink: 0;
`;

const CheckItem = styled.div`
  display: flex;
  align-items: center;
  gap: 3px;
  white-space: nowrap;
`;

const CheckBox = styled.span`
  width: 14px;
  height: 14px;
  border-radius: 2px;
  background: #6fb0f5;
  display: flex;
  align-items: center;
  justify-content: center;
`;

const ProblemTable = styled.div`
  width: 458px;
  height: 234px;
  margin-left: 11px;
  box-sizing: border-box;
  background: #fff;
  border: 1px solid #c4c4c4;
  flex-shrink: 0;
`;

const rowGrid = `
  display: grid;
  grid-template-columns: 140px 90px 1fr;
`;

const ProblemHead = styled.div`
  ${rowGrid}
  width: 439px;
  height: 20px;
  align-items: center;
  background: #7fb9f9;
  color: #fff;
  border-bottom: 1px solid #c4c4c4;
  text-align: center;
  font-weight: 500;
`;

const ProblemRow = styled.div`
  ${rowGrid}
  width: 441px;
  height: 19px;
  box-sizing: border-box;
  align-items: center;
  background: ${p => (p.$on ? '#3898ff' : 'transparent')};
  color: ${p => (p.$on ? '#fff' : '#222')};
  border-bottom: ${p => (p.$on ? '1px solid #7d7d7d' : 'none')};
  border-right: ${p => (p.$on ? '1px solid #7d7d7d' : 'none')};
  span {
    padding-left: 3px;
    white-space: nowrap;
  }
`;

const DialogFoot = styled.div`
  flex: 1;
  padding: 7px 11px 0 0;
  display: flex;
  justify-content: flex-end;
  align-items: flex-start;
`;

const RefreshBtn = styled.div`
  width: 80px;
  height: 26px;
  display: flex;
  align-items: center;
  justify-content: center;
  background: #2e7de1;
  color: #fff;
  border-radius: 3px;
`;

const Grip = styled.svg`
  position: absolute;
  right: 2px;
  bottom: 2px;
`;
